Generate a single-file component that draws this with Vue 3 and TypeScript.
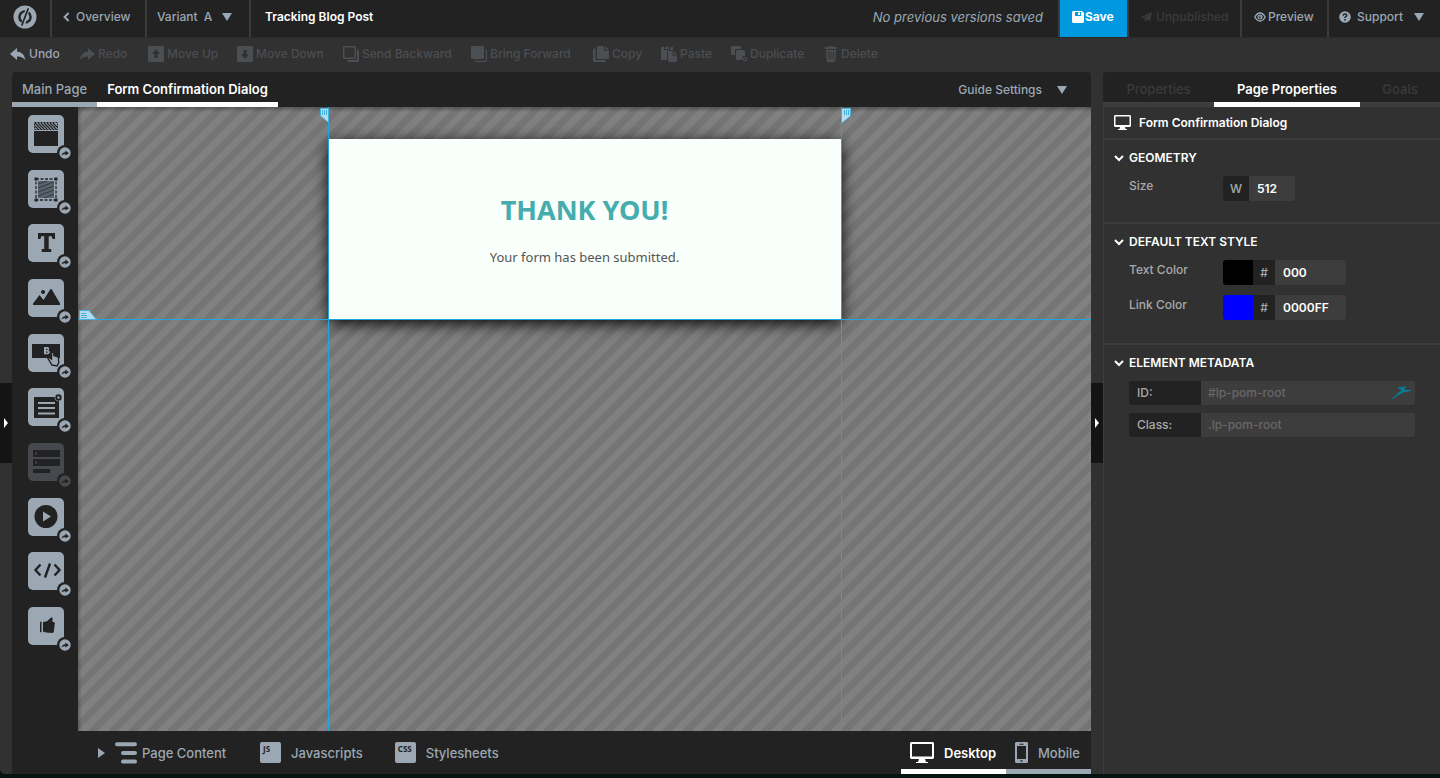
<script setup lang="ts">
import { ref } from 'vue'

interface Tool {
  id: string
  label: string
  enabled: boolean
}

const tools: Tool[] = [
  { id: 'undo', label: 'Undo', enabled: true },
  { id: 'redo', label: 'Redo', enabled: false },
  { id: 'up', label: 'Move Up', enabled: false },
  { id: 'down', label: 'Move Down', enabled: false },
  { id: 'back', label: 'Send Backward', enabled: false },
  { id: 'front', label: 'Bring Forward', enabled: false },
  { id: 'copy', label: 'Copy', enabled: false },
  { id: 'paste', label: 'Paste', enabled: false },
  { id: 'duplicate', label: 'Duplicate', enabled: false },
  { id: 'delete', label: 'Delete', enabled: false },
]

const widgets: Tool[] = [
  { id: 'section', label: 'Section', enabled: true },
  { id: 'box', label: 'Box', enabled: true },
  { id: 'text', label: 'Text', enabled: true },
  { id: 'image', label: 'Image', enabled: true },
  { id: 'button', label: 'Button', enabled: true },
  { id: 'lightbox', label: 'Lightbox', enabled: true },
  { id: 'form', label: 'Form', enabled: false },
  { id: 'video', label: 'Video', enabled: true },
  { id: 'html', label: 'Custom HTML', enabled: true },
  { id: 'social', label: 'Social', enabled: true },
]

const variant = ref('A')
const pageWidth = ref('512')
const textColor = ref('000')
const linkColor = ref('0000FF')
const elementId = ref('')
const elementClass = ref('')
</script>

<template>
  <div class="app">
    <header class="topbar">
      <a class="logo" href="#" aria-label="Home">
        <svg width="24" height="24" viewBox="0 0 24 24">
          <circle cx="12" cy="12" r="11.5" fill="#9ba8b4" />
          <circle cx="12" cy="12" r="5.6" fill="none" stroke="#222" stroke-width="2.4" />
          <path d="M14.9 3.2 9.6 20.8" stroke="#9ba8b4" stroke-width="4" />
          <path d="M15.3 3.4 11 14.6M13 9.4 8.7 20.6" stroke="#222" stroke-width="1.6" />
        </svg>
      </a>
      <a class="overview" href="#">
        <svg width="7" height="10" viewBox="0 0 7 10"><path d="M5.6 1 1.6 5l4 4" fill="none" stroke="currentColor" stroke-width="2" /></svg>
        Overview
      </a>
      <div class="variant">
        <label for="variant">Variant</label>
        <select id="variant" v-model="variant"><option>A</option></select>
        <svg width="10" height="8" viewBox="0 0 10 8"><path d="M0 0h10L5 8z" fill="currentColor" /></svg>
      </div>
      <h1 class="title">Tracking Blog Post</h1>
      <em class="versions">No previous versions saved</em>
      <button class="save" type="button">
        <svg width="12" height="12" viewBox="0 0 12 12"><path fill-rule="evenodd" d="M1 0h9l2 2v9l-1 1H1l-1-1V1zM3 1v4h6V1zM6 1.5h2v2.5H6z" fill="#fff" /></svg>
        Save
      </button>
      <button class="unpublished" type="button" disabled>
        <svg width="11" height="10" viewBox="0 0 11 10"><path d="M11 0 9 9 5.500 7.500 4 10 3.500 6.500 9 2 2.600 6 0 5z" fill="currentColor" /></svg>
        Unpublished
      </button>
      <button class="preview" type="button">
        <svg width="12" height="10" viewBox="0 0 12 10">
          <path d="M.8 5Q3 1 6 1t5.200 4Q9 9 6 9T.8 5z" fill="none" stroke="currentColor" stroke-width="1.300" />
          <circle cx="6" cy="5" r="2" fill="none" stroke="currentColor" stroke-width="1.200" />
          <path d="M6 3v2h2" fill="none" stroke="currentColor" />
        </svg>
        Preview
      </button>
      <button class="support" type="button" aria-haspopup="menu">
        <svg width="12" height="12" viewBox="0 0 12 12">
          <circle cx="6" cy="6" r="5.800" fill="currentColor" />
          <path d="M4.200 4.800Q4.200 3 6 3t1.800 1.600Q7.800 5.600 6 6.400v.6" fill="none" stroke="#222" stroke-width="1.400" />
          <path d="M5.200 8h1.600v1.500H5.200z" fill="#222" />
        </svg>
        <span>Support</span>
        <svg width="10" height="8" viewBox="0 0 10 8"><path d="M0 0h10L5 8z" fill="currentColor" /></svg>
      </button>
    </header>

    <nav class="toolbar" aria-label="Editing">
      <button v-for="t in tools" :key="t.id" type="button" :class="['tool', t.id]" :disabled="!t.enabled">
        <svg width="16" height="16" viewBox="0 0 16 16" fill="currentColor">
          <path v-if="t.id === 'undo'" d="M0 8 7 2v3.500Q14 6 15.500 14 12 10 7 10.500V14z" />
          <path v-else-if="t.id === 'redo'" d="M16 8 9 2v3.500Q2 6 .5 14 4 10 9 10.500V14z" />
          <path v-else-if="t.id === 'up'" fill-rule="evenodd" d="M1 0h14l1 1v14l-1 1H1l-1-1V1zM8 3 4 8h2.500v4h3V8H12z" />
          <path v-else-if="t.id === 'down'" fill-rule="evenodd" d="M1 0h14l1 1v14l-1 1H1l-1-1V1zM8 13 4 8h2.500V4h3v4H12z" />
          <path v-else-if="t.id === 'back'" fill-rule="evenodd" d="M1 0h11l1 1v11l-1 1H1l-1-1V1zM1.500 1.500v10h10v-10zM14 3.500l2 1V15l-1 1H5l-1.500-2H13l1-1z" />
          <path v-else-if="t.id === 'front'" fill-rule="evenodd" d="M1 0h11l1 1v11l-1 1H1l-1-1V1zM14 3.500l2 1V15l-1 1H5l-1.500-2H5v.8h9.800V5H14z" />
          <path v-else-if="t.id === 'copy'" d="M5 0h6v4.500h5V12l-1 1H5l-1-1V1zM12 0l4 3.500h-4zM0 3l2.500-1v12H13v1l-1 1H1l-1-1z" />
          <path v-else-if="t.id === 'paste'" d="M0 1h3v3h6V1h3v3H8L6 6v8H0zM4 1.500h1L5.500 0h1L7 1.500h1V3H4zM7 6l1-1h3.500v4.500H16V15l-1 1H8l-1-1zM12.500 5 16 8.500h-3.500z" />
          <path v-else-if="t.id === 'duplicate'" fill-rule="evenodd" d="M0 1l1-1h8l1 1v2H5L4 4v5H1L0 8zM5 5l1-1h7l1 1v5h-2l-1 2v2H6l-1-1zM13.800 11a2.300 2.300 0 1 0 .1 0zM13.800 12.300a1 1 0 1 1-.1 0z" />
          <path v-else fill-rule="evenodd" d="M0 1h4V0h4v1h4v2H0zM1 4h10l-.8 11-1 1H2.800l-1-1zM3 5.500l.5 8h1l-.3-8zM5.500 5.500v8h1v-8zM8 5.500l-.3 8h1l.4-8z" />
        </svg>
        {{ t.label }}
      </button>
    </nav>

    <div class="workspace">
      <div class="gutter">
        <button class="handle" type="button" aria-label="Collapse left panel">
          <svg width="4" height="10" viewBox="0 0 4 10"><path d="M0 0l4 5-4 5z" fill="#fff" /></svg>
        </button>
      </div>

      <main class="editor">
        <div class="pagetabs">
          <button class="pagetab" type="button">Main Page</button>
          <button class="pagetab active" type="button">Form Confirmation Dialog</button>
          <button class="guides" type="button" aria-haspopup="menu">
            Guide Settings
            <svg width="10" height="8" viewBox="0 0 10 8"><path d="M0 0h10L5 8z" fill="currentColor" /></svg>
          </button>
        </div>

        <div class="body">
          <aside class="palette" aria-label="Widgets">
            <ul>
              <li v-for="w in widgets" :key="w.id">
                <button type="button" class="widget" :disabled="!w.enabled" :aria-label="w.label">
                  <svg width="36" height="38" viewBox="0 0 36 38">
                    <g v-if="w.id === 'section'">
                      <path d="M6 16h24v15H6z" fill="#222" />
                      <path d="M6.500 7.500h23v7h-23z" fill="none" stroke="#222" stroke-dasharray="2 1" />
                      <path d="M7 8l6 6M10 8l6 6M13 8l6 6M16 8l6 6M19 8l6 6M22 8l6 6M25 8l4 4M7 11l3 3" stroke="#222" stroke-width="1.300" />
                    </g>
                    <g v-else-if="w.id === 'box'">
                      <path d="M10 11h16v17H10z" fill="#59626a" />
                      <path d="M10 14l9-3M10 18l16-6M10 22l16-6M10 26l16-6M16 28l10-4" stroke="#333a40" />
                      <path d="M8 9h20v21H8z" fill="none" stroke="#222" stroke-width="1.300" stroke-dasharray="3 1.500" />
                      <path d="M6.500 7.500h3v3h-3zM26.500 7.500h3v3h-3zM6.500 28.500h3v3h-3zM26.500 28.500h3v3h-3z" fill="#222" />
                    </g>
                    <path v-else-if="w.id === 'text'" d="M10 9h17v6h-2.500l-.8-2.800h-3V25h2.500v3h-9.500v-3h2.500V12.200h-3l-.8 2.800H10z" fill="#222" />
                    <path v-else-if="w.id === 'image'" d="M5 26v-1.500l6.500-8.500 4 5L22.500 10h1L32 24.500V26zM15 11a2 2 0 1 0 .1 0z" fill="#222" />
                    <g v-else-if="w.id === 'button'">
                      <path d="M4 10h28v14H4z" fill="#222" />
                      <path d="M16 13h3.200q2 0 2 1.800 0 1-1 1.500 1.600.4 1.600 2 0 2-2.200 2H16zM18 14.700v1.400h.8q.8 0 .8-.7t-.8-.7zM18 17.400v1.400h1q.9 0 .9-.7t-.9-.7z" fill="#9ba8b4" fill-rule="evenodd" />
                      <path d="M23.500 18v7l-2-1.500-1.500 1 4 6.500 5 1 1.800-3.500-.5-5.500-4.500-1.500V18.300z" fill="#9ba8b4" stroke="#222" stroke-width="1.400" />
                    </g>
                    <g v-else-if="w.id === 'lightbox'">
                      <path d="M6 9h25v21H6z" fill="#222" />
                      <path d="M10 15h17M10 20h17M10 25.500h17" stroke="#9ba8b4" stroke-width="2" />
                      <circle cx="30.500" cy="9.500" r="3.800" fill="#9ba8b4" />
                      <circle cx="30.500" cy="9.500" r="2.200" fill="none" stroke="#222" stroke-width="2" />
                    </g>
                    <g v-else-if="w.id === 'form'">
                      <path d="M5 7h27v7H5zM5 16h27v7H5zM5 26h17v4H5z" fill="#222" />
                      <path d="M7 9.500h2v2H7zM7 18.500h2v2H7z" fill="#45484d" />
                    </g>
                    <g v-else-if="w.id === 'video'">
                      <circle cx="18" cy="18.500" r="11.500" fill="#222" />
                      <path d="M15 13.500l8 5-8 5z" fill="#9ba8b4" />
                    </g>
                    <path v-else-if="w.id === 'html'" d="M12.500 12.500 7.500 18l5 5.500M26.500 12.500l5 5.500-5 5.500M22 11.500l-5 14" fill="none" stroke="#222" stroke-width="2.400" />
                    <path v-else d="M12 15l1.500-.5v11L12 25zM15 15l4-.8 4-3.700h1.500v4.500H26l.8 1-1 9-1.300 1-6.500-.5-3-1z" fill="#222" />
                  </svg>
                  <svg class="badge" width="16" height="16" viewBox="0 0 16 16">
                    <circle cx="8" cy="8" r="8" fill="#222" />
                    <circle cx="8" cy="8" r="5.700" fill="currentColor" />
                    <path d="M4.500 10.500Q5 7.400 8.300 7.200V5.500L12 8.200 8.300 10.500V9Q6 9 4.500 10.500z" fill="#222" />
                  </svg>
                </button>
              </li>
            </ul>
          </aside>

          <div class="stage">
            <section class="canvas">
              <article class="dialog">
                <h2>THANK YOU!</h2>
                <p>Your form has been submitted.</p>
              </article>
              <div class="guide guide-left">
                <svg width="9" height="15" viewBox="0 0 9 15"><path d="M.5.500h8v14L.5 8z" fill="#b5dcec" stroke="#43b0dd" /><path d="M2.500 2v5M4.500 2v5M6.500 2v5" stroke="#43b0dd" /></svg>
              </div>
              <div class="guide guide-right">
                <svg width="10" height="16" viewBox="0 0 10 16"><path d="M.5.500h9V8l-9 7.500z" fill="#b5dcec" stroke="#43b0dd" /><path d="M3.500 2v5M5.500 2v5M7.500 2v5" stroke="#43b0dd" /></svg>
              </div>
              <div class="guide-bottom">
                <svg width="18" height="10" viewBox="0 0 18 10"><path d="M.5.500H10l7.500 9H.5z" fill="#b5dcec" stroke="#43b0dd" /><path d="M2 3.500h5M2 5.500h6M2 7.500h6" stroke="#43b0dd" /></svg>
              </div>
            </section>

            <footer class="bottombar">
              <button class="content" type="button">
                <svg width="7" height="10" viewBox="0 0 7 10"><path d="M0 0l7 5-7 5z" fill="currentColor" /></svg>
                <svg width="22" height="22" viewBox="0 0 22 22"><path d="M2 2.300h18M8 11h12M8 19.500h12" stroke="currentColor" stroke-width="4" stroke-linecap="round" /></svg>
                Page Content
              </button>
              <button class="asset" type="button"><span class="chip">JS</span>Javascripts</button>
              <button class="asset" type="button"><span class="chip">CSS</span>Stylesheets</button>
              <button class="device desktop" type="button">
                <svg width="24" height="21" viewBox="0 0 24 21"><path fill-rule="evenodd" d="M1 0h22l1 1v15l-1 1h-8l1 3h2v1H6v-1h2l1-3H1l-1-1V1zM2 2v12.500h20V2z" fill="currentColor" /></svg>
                Desktop
              </button>
              <button class="device mobile" type="button">
                <svg width="13" height="21" viewBox="0 0 13 21"><path fill-rule="evenodd" d="M1 0h11l1 1v19l-1 1H1l-1-1V1zM2 4v13h9V4zM4.500 1.800v1h4v-1zM5.500 18.300v1.500h2v-1.500z" fill="currentColor" /></svg>
                Mobile
              </button>
            </footer>
          </div>
        </div>
      </main>

      <div class="gutter">
        <button class="handle" type="button" aria-label="Collapse right panel">
          <svg width="4" height="10" viewBox="0 0 4 10"><path d="M0 0l4 5-4 5z" fill="#fff" /></svg>
        </button>
      </div>

      <aside class="inspector">
        <div class="tabs">
          <button type="button" disabled>Properties</button>
          <button type="button" class="active">Page Properties</button>
          <button type="button" disabled>Goals</button>
        </div>
        <div class="panels">
          <div class="subject">
            <svg width="17" height="15" viewBox="0 0 17 15"><path fill-rule="evenodd" d="M1 0h15l1 1v10l-1 1h-5l.5 2H13v1H4v-1h1.500l.5-2H1l-1-1V1zM1.500 1.500v8.500h14V1.500z" fill="#fff" /></svg>
            Form Confirmation Dialog
          </div>

          <section class="group geometry">
            <h3><svg width="10" height="7" viewBox="0 0 10 7"><path d="M1 1l4 4 4-4" fill="none" stroke="#fff" stroke-width="2" /></svg>GEOMETRY</h3>
            <div class="row">
              <label for="size">Size</label>
              <div class="field size"><span class="prefix">W</span><input id="size" v-model="pageWidth" type="text"></div>
            </div>
          </section>

          <section class="group textstyle">
            <h3><svg width="10" height="7" viewBox="0 0 10 7"><path d="M1 1l4 4 4-4" fill="none" stroke="#fff" stroke-width="2" /></svg>DEFAULT TEXT STYLE</h3>
            <div class="row">
              <label for="textcolor">Text Color</label>
              <div class="field color">
                <button type="button" class="swatch" aria-label="Pick text color" :style="{ background: '#' + textColor }"></button>
                <span class="prefix">#</span><input id="textcolor" v-model="textColor" type="text">
              </div>
            </div>
            <div class="row">
              <label for="linkcolor">Link Color</label>
              <div class="field color">
                <button type="button" class="swatch" aria-label="Pick link color" :style="{ background: '#' + linkColor }"></button>
                <span class="prefix">#</span><input id="linkcolor" v-model="linkColor" type="text">
              </div>
            </div>
          </section>

          <section class="group metadata">
            <h3><svg width="10" height="7" viewBox="0 0 10 7"><path d="M1 1l4 4 4-4" fill="none" stroke="#fff" stroke-width="2" /></svg>ELEMENT METADATA</h3>
            <div class="meta">
              <label for="elid">ID:</label>
              <input id="elid" v-model="elementId" type="text" placeholder="#lp-pom-root">
              <svg width="20" height="14" viewBox="0 0 20 14"><path d="M0 14 1 12 7 6 10 4.300 6 2V1l4 .3L12.500 0 14 1l-1.500 1.500.5 1.500h7l-4 1.800-3.500.2-3 1.200-4 2.500z" fill="#087f98" /></svg>
            </div>
            <div class="meta">
              <label for="elclass">Class:</label>
              <input id="elclass" v-model="elementClass" type="text" placeholder=".lp-pom-root">
            </div>
          </section>
        </div>
      </aside>
    </div>
  </div>
</template>

<style>
body {
  background: #07130f;
}
</style>

<style scoped>
* {
  box-sizing: border-box;
}
.app {
  display: flex;
  flex-direction: column;
  height: calc(100vh - 4px);
  overflow: hidden;
  border-radius: 0 0 0 5px;
  background: #313131;
  color: #9ba8b4;
  font-family: Inter, 'Liberation Sans', sans-serif;
  font-size: 12px;
  line-height: 16px;
  font-weight: 500;
}
button,
input,
select {
  margin: 0;
  padding: 0;
  border: 0;
  border-radius: 0;
  background: none;
  color: inherit;
  font: inherit;
}
button {
  display: flex;
  align-items: center;
  white-space: nowrap;
}
svg {
  display: block;
  flex: none;
}
a {
  color: inherit;
  text-decoration: none;
}
.topbar {
  display: flex;
  align-items: stretch;
  flex: none;
  height: 38px;
  border-bottom: 1px solid #292929;
  background: #222;
}
.topbar > * {
  display: flex;
  align-items: center;
  padding-bottom: 3px;
}
.logo {
  width: 50px;
  padding-left: 13px;
}
.overview,
.variant,
.title {
  border-left: 2px solid #3b3b3b;
}
.overview {
  gap: 6px;
  width: 95px;
  padding-left: 11px;
}
.variant {
  width: 104px;
  padding-left: 10px;
}
.variant select {
  width: 20px;
  margin-left: 4px;
  padding-left: 2px;
  appearance: none;
}
.title {
  flex: 1;
  margin: 0;
  padding-left: 14px;
  color: #fff;
  font-size: 12px;
  font-weight: 600;
}
.versions {
  padding-right: 15px;
  font-size: 13px;
  font-weight: 400;
}
.save,
.unpublished,
.preview,
.support {
  border-left: 2px solid #3b3b3b;
}
.save {
  gap: 1px;
  width: 69px;
  padding-left: 12px;
  background: #0099e0;
  color: #fff;
  font-weight: 700;
}
.unpublished {
  gap: 4px;
  width: 113px;
  padding-left: 12px;
  color: #3b3b3b;
}
.preview {
  gap: 2px;
  width: 87px;
  padding-left: 12px;
}
.support {
  width: 113px;
  padding-left: 10px;
}
.support span {
  width: 57px;
  margin-left: 6px;
  text-align: left;
}
.toolbar {
  display: grid;
  grid-template-columns: 69px 69px 89px 106px 128px 122px 68px 70px 94px auto;
  flex: none;
  align-items: center;
  justify-content: start;
  height: 34px;
  padding: 0 10px 2px;
}
.tool {
  gap: 3px;
}
.tool:disabled {
  color: #4b4e52;
}
.tool.delete {
  gap: 0;
}
.workspace {
  display: flex;
  flex: 1;
  min-height: 0;
}
.gutter {
  display: flex;
  align-items: center;
  flex: none;
  width: 12px;
}
.handle {
  width: 12px;
  height: 80px;
  padding-left: 4px;
  background: #141414;
}
.editor {
  display: flex;
  flex: 1;
  flex-direction: column;
  min-width: 0;
  overflow: hidden;
  border-radius: 4px 4px 0 0;
  background: #222;
}
.pagetabs {
  display: flex;
  flex: none;
  height: 35px;
  font-size: 13px;
}
.pagetab {
  padding: 4px 10px 0;
  border-bottom: 5px solid #9ba8b4;
}
.pagetab.active {
  border-color: #fff;
  color: #fff;
  font-weight: 600;
}
.guides {
  gap: 15px;
  margin-left: auto;
  padding-right: 24px;
  font-size: 12px;
}
.body {
  display: flex;
  flex: 1;
  min-height: 0;
}
.palette {
  flex: none;
  width: 66px;
}
.palette ul {
  display: flex;
  flex-direction: column;
  justify-content: space-between;
  height: 530px;
  margin: 8px 0 0 16px;
  padding: 0;
  list-style: none;
}
.widget {
  position: relative;
  width: 36px;
  height: 38px;
  border-radius: 5px;
  background: #9ba8b4;
  color: #9ba8b4;
}
.widget:disabled {
  background: #45484d;
  color: #45484d;
}
.badge {
  position: absolute;
  right: -9px;
  bottom: -8px;
}
.stage {
  display: flex;
  flex: 1;
  flex-direction: column;
  min-width: 0;
}
.canvas {
  position: relative;
  flex: 1;
  overflow: hidden;
  padding-top: 32px;
  background:
    linear-gradient(rgba(0, 0, 0, 0.3), transparent 5px),
    linear-gradient(90deg, rgba(0, 0, 0, 0.2), transparent 4px),
    repeating-linear-gradient(135deg, #757575 0 7px, #808080 7px 14px);
}
.dialog {
  width: 512px;
  height: 180px;
  margin: 0 auto;
  padding-top: 52px;
  background: #f9fffa;
  box-shadow: 0 4px 15px #000;
  font-family: 'Noto Sans', 'Open Sans', sans-serif;
  text-align: center;
}
.dialog h2 {
  margin: 0;
  color: #45adad;
  font-size: 27px;
  line-height: 38px;
  font-weight: 700;
}
.dialog p {
  margin: 17px 0 0;
  color: #555;
  font-size: 13px;
  line-height: 22px;
  font-weight: 400;
}
.guide {
  position: absolute;
  top: 0;
  bottom: 0;
  width: 1px;
  background: #1ba8e0;
}
.guide-left {
  left: calc(50% - 257px);
}
.guide-left svg {
  position: absolute;
  top: 1px;
  right: 0;
}
.guide-right {
  left: calc(50% + 256px);
}
.guide-right svg {
  position: absolute;
  top: 1px;
  left: 0;
}
.guide-bottom {
  position: absolute;
  top: 212px;
  right: 0;
  left: 0;
  height: 1px;
  background: #1ba8e0;
}
.guide-bottom svg {
  position: absolute;
  bottom: 0;
  left: 1px;
}
.bottombar {
  display: flex;
  flex: none;
  height: 43px;
  background: #222;
  font-size: 13px;
}
.content {
  width: 182px;
  padding-left: 20px;
}
.content svg + svg {
  margin: 0 5px 0 10px;
}
.asset {
  gap: 10px;
  margin-right: 32px;
}
.chip {
  width: 21px;
  height: 21px;
  padding: 2px 3px;
  border-radius: 2px;
  background: #9ba8b4;
  color: #222;
  font-family: 'Noto Sans', sans-serif;
  font-size: 8px;
  line-height: 10px;
  font-weight: 700;
  text-align: left;
}
.device {
  gap: 10px;
  padding-left: 9px;
  border-bottom: 5px solid #9ba8b4;
  padding-top: 5px;
}
.desktop {
  width: 105px;
  margin-left: auto;
  border-color: #fff;
  color: #fff;
  font-weight: 600;
}
.mobile {
  width: 85px;
}
.inspector {
  flex: none;
  width: 337px;
}
.tabs {
  display: grid;
  grid-template-columns: 111px 146px 1fr;
  height: 35px;
  border-radius: 4px 0 0 0;
  background: #222;
  font-size: 13px;
}
.tabs button {
  justify-content: center;
  padding-top: 3px;
  border-bottom: 5px solid #3d3d3d;
  color: #3b3b3b;
}
.tabs .active {
  border-color: #fff;
  color: #fff;
  font-weight: 600;
}
.panels {
  height: calc(100% - 35px);
  border-left: 1px solid #3d3d3d;
}
.subject {
  display: flex;
  align-items: center;
  gap: 8px;
  height: 31px;
  padding-left: 10px;
  color: #fff;
  font-weight: 600;
}
.group {
  padding: 10px 25px 0 10px;
  border-top: 2px solid #3d3d3d;
}
.group h3 {
  display: flex;
  align-items: center;
  gap: 5px;
  margin: 0;
  color: #fff;
  font-size: 12px;
  font-weight: 600;
}
.geometry {
  height: 84px;
}
.textstyle {
  height: 121px;
}
.row {
  display: grid;
  grid-template-columns: 94px auto;
  justify-content: start;
  margin: 10px 0 0 15px;
  color: #aaa;
}
.row label {
  padding-top: 2px;
}
.field {
  display: flex;
  height: 25px;
  overflow: hidden;
  border-radius: 3px;
  background: #3d3d3d;
}
.size {
  width: 72px;
}
.color {
  width: 123px;
}
.swatch {
  flex: none;
  width: 30px;
}
.prefix {
  flex: none;
  width: 22px;
  background: #222;
  line-height: 25px;
  text-align: center;
}
.size .prefix {
  width: 26px;
}
.field input {
  width: 100%;
  min-width: 0;
  padding: 0 8px;
  color: #fff;
  font-weight: 600;
}
.meta {
  display: flex;
  align-items: center;
  height: 24px;
  margin: 8px 0 0 15px;
  padding-right: 3px;
  overflow: hidden;
  border-radius: 3px;
  background: #3d3d3d;
  color: #aaa;
}
h3 + .meta {
  margin-top: 10px;
}
.meta label {
  flex: none;
  width: 72px;
  padding-left: 8px;
  background: #222;
  line-height: 24px;
}
.meta input {
  flex: 1;
  min-width: 0;
  padding: 0 7px;
}
.meta input::placeholder {
  color: #686868;
  opacity: 1;
}
</style>
